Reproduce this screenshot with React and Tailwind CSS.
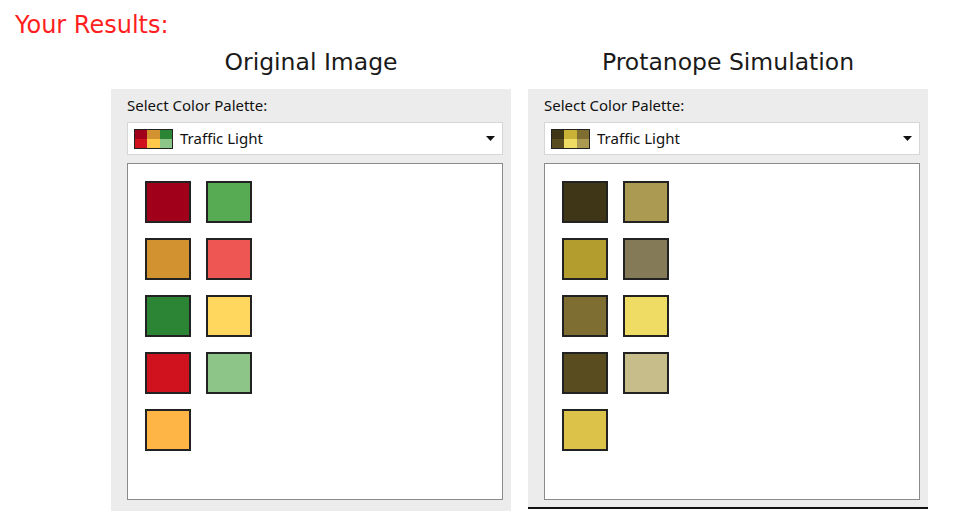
import React from "react";

const original = ["#a0001a", "#57ab53", "#d39230", "#ee5654", "#2b8535", "#ffd75f", "#d0121f", "#8dc588", "#ffb446"];
const protanope = ["#3f3517", "#aa9a52", "#b39d2e", "#857a58", "#7e6e32", "#efdc65", "#594d20", "#c6bd8a", "#dcc249"];

const iconOriginal = ["#a0001a", "#d39230", "#2b8535", "#d0121f", "#ffc84a", "#8dc588"];
const iconProtanope = ["#3f3517", "#c9b235", "#7e6e32", "#594d20", "#efdc65", "#aa9a52"];

function PaletteIcon({ colors }) {
  return (
    <div className="grid grid-cols-3 grid-rows-2 w-[39px] h-[20px] border border-[#222] shrink-0">
      {colors.map((c, i) => (
        <div key={i} style={{ backgroundColor: c }} />
      ))}
    </div>
  );
}

function Panel({ title, colors, icon, bottomLine }) {
  return (
    <div className="flex flex-col w-[400px]">
      <h2 className="text-center text-[23.5px] leading-[27px] text-[#1a1a1a]">{title}</h2>
      <div
        className={
          "mt-[13px] bg-[#ececec] pl-[16px] pr-[8px] pt-[6px] " +
          (bottomLine ? "h-[420px] border-b-2 border-[#111]" : "h-[422px]")
        }
      >
        <div className="font-['Noto_Sans',sans-serif] text-[15px] leading-[20px] text-[#111]">
          Select Color Palette:
        </div>
        {/* dropdown */}
        <div className="mt-[7px] h-[33px] bg-white border border-[#d6d6d6] flex items-center pl-[6px] pr-[7px]">
          <PaletteIcon colors={icon} />
          <span className="ml-[7px] font-['Noto_Sans',sans-serif] text-[15px] text-[#111]">Traffic Light</span>
          <svg className="ml-auto" width="9" height="5" viewBox="0 0 9 5">
            <path d="M0 0h9L4.5 5z" fill="#111" />
          </svg>
        </div>
        {/* list */}
        <div className="mt-[8px] h-[337px] bg-white border border-[#8a8a8a] pl-[17px] pt-[17px]">
          <div className="grid grid-cols-[46px_46px] auto-rows-[42px] gap-x-[15px] gap-y-[15px]">
            {colors.map((c, i) => (
              <div key={i} className="border-2 border-[#222]" style={{ backgroundColor: c }} />
            ))}
          </div>
        </div>
      </div>
    </div>
  );
}

export default function App() {
  return (
    <div className="w-[975px] h-[524px] bg-white font-['DejaVu_Sans',sans-serif] overflow-hidden">
      <div className="pl-[15px] pt-[11px] text-[24px] leading-[28px] text-[#ff1f1f]">Your Results:</div>
      <div className="flex gap-[17px] pl-[111px] mt-[10px]">
        <Panel title="Original Image" colors={original} icon={iconOriginal} />
        <Panel title="Protanope Simulation" colors={protanope} icon={iconProtanope} bottomLine />
      </div>
    </div>
  );
}
